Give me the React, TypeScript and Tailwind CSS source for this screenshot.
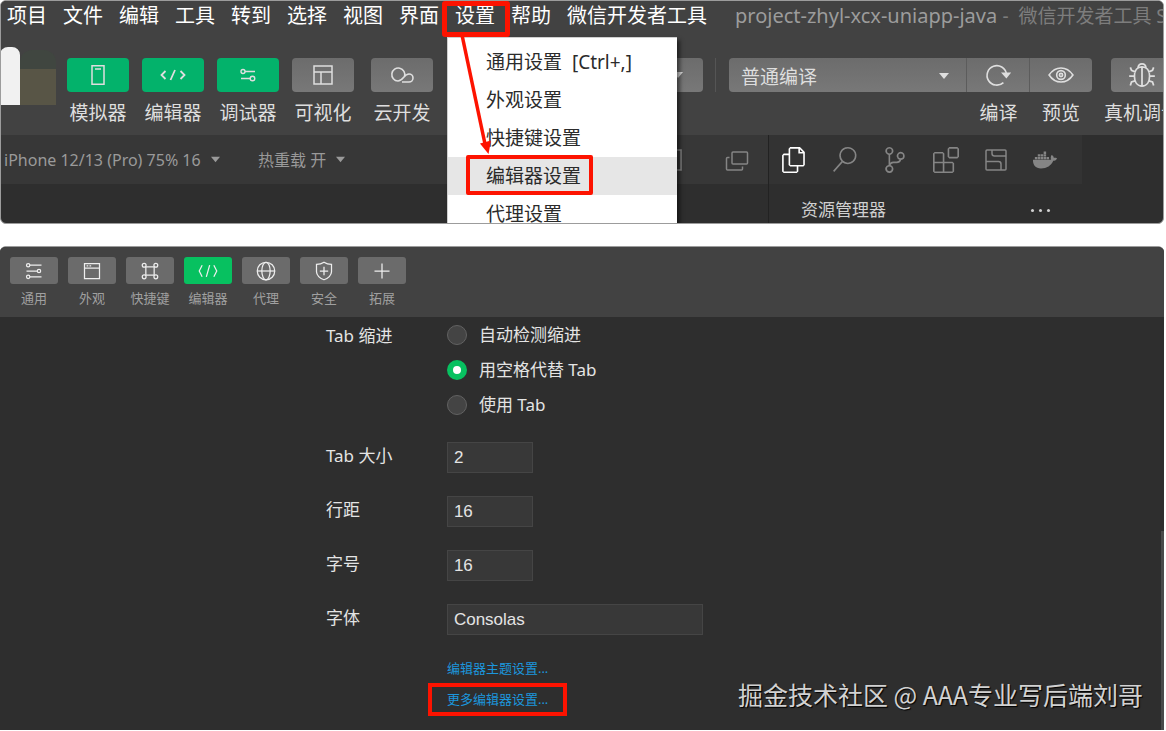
import { useState } from "react";
import type { ReactNode } from "react";
import { VscFiles, VscSearch, VscSourceControl, VscExtensions } from "react-icons/vsc";
import { FaDocker } from "react-icons/fa";

const menus = ["项目", "文件", "编辑", "工具", "转到", "选择", "视图", "界面", "设置", "帮助", "微信开发者工具"];

const settingsMenu = ["通用设置  [Ctrl+,]", "外观设置", "快捷键设置", "编辑器设置", "代理设置"];

function Icon({ size, children }: { size: number; children: ReactNode }) {
  return (
    <svg width={size} height={size} viewBox="0 0 24 24" fill="none" stroke="currentColor" strokeWidth="1.5">
      {children}
    </svg>
  );
}

function Caret({ className }: { className: string }) {
  return (
    <svg className={className} viewBox="0 0 10 6" fill="currentColor">
      <path d="M0 0h10L5 6z" />
    </svg>
  );
}

const tools = [
  {
    label: "模拟器",
    on: true,
    icon: (
      <Icon size={24}>
        <path d="M6 2.8h12v18.4H6zM9 6h6" />
      </Icon>
    ),
  },
  {
    label: "编辑器",
    on: true,
    icon: (
      <svg width="26" height="16" viewBox="0 0 26 16" fill="none" stroke="currentColor" strokeWidth="1.8">
        <path d="M5.500 4 1.500 8l4 4M20.500 4l4 4-4 4M15 3l-4.500 10" />
      </svg>
    ),
  },
  {
    label: "调试器",
    on: true,
    icon: (
      <svg width="18" height="16" viewBox="0 0 18 16" fill="none" stroke="currentColor" strokeWidth="1.4">
        <circle cx="4" cy="4.500" r="2" />
        <path d="M6 4.500h10M2 11.500h9" />
        <circle cx="13.500" cy="11.500" r="2.300" />
      </svg>
    ),
  },
  {
    label: "可视化",
    on: false,
    icon: (
      <Icon size={24}>
        <path d="M3 3h18v18H3zM3 9h18M10 9v12" />
      </Icon>
    ),
  },
  {
    label: "云开发",
    on: false,
    icon: (
      <svg width="24" height="18" viewBox="0 0 24 18" fill="none" stroke="currentColor" strokeWidth="1.6">
        <path d="M14.500 10.500A6.500 6.500 0 1 0 8 15c5 0 6-7 11-7a4 4 0 0 1 0 8h-7" />
      </svg>
    ),
  },
];

const tabs = [
  {
    label: "通用",
    icon: (
      <Icon size={20}>
        <circle cx="5" cy="5" r="2" />
        <circle cx="18" cy="12" r="2" />
        <circle cx="5" cy="19" r="2" />
        <path d="M7 5h14M3 12h13M7 19h14" />
      </Icon>
    ),
  },
  {
    label: "外观",
    icon: (
      <Icon size={20}>
        <path d="M3 3h18v18H3zM3 8.500h18M5.500 5.800h2M9 5.800h2" />
      </Icon>
    ),
  },
  {
    label: "快捷键",
    icon: (
      <Icon size={20}>
        <path d="M7 7h10v10H7z" />
        <circle cx="5" cy="5" r="2.300" />
        <circle cx="19" cy="5" r="2.300" />
        <circle cx="5" cy="19" r="2.300" />
        <circle cx="19" cy="19" r="2.300" />
      </Icon>
    ),
  },
  {
    label: "编辑器",
    icon: (
      <Icon size={20}>
        <path d="M5 5 1.500 12 5 19M19 5l3.500 7L19 19M14 5l-4 14" />
      </Icon>
    ),
  },
  {
    label: "代理",
    icon: (
      <Icon size={20}>
        <circle cx="12" cy="12" r="10.500" />
        <ellipse cx="12" cy="12" rx="5" ry="10.500" />
        <path d="M1.500 12h21" />
      </Icon>
    ),
  },
  {
    label: "安全",
    icon: (
      <Icon size={20}>
        <path d="M12 1.500c3 2 6 2.500 9 2.500v9c0 4-4 8-9 9.500-5-1.500-9-5.500-9-9.500V4c3 0 6-.5 9-2.500zM12 7v10M7 12h10" />
      </Icon>
    ),
  },
  {
    label: "拓展",
    icon: (
      <Icon size={20}>
        <path d="M12 3v18M3 12h18" />
      </Icon>
    ),
  },
];

const indentModes = ["自动检测缩进", "用空格代替 Tab", "使用 Tab"];

const fields = [
  { id: "tab-size", label: "Tab 大小", value: "2", width: "w-[86px]" },
  { id: "line-height", label: "行距", value: "16", width: "w-[86px]" },
  { id: "font-size", label: "字号", value: "16", width: "w-[86px]" },
  { id: "font-family", label: "字体", value: "Consolas", width: "w-[256px]" },
];

function MainWindow() {
  return (
    <section className="relative overflow-hidden rounded-md border border-[#9c9c9c] bg-[#2e2e2e]">
      <header className="bg-[#424242]">
        {/* menu bar */}
        <nav className="flex h-[33px] items-center gap-4 whitespace-nowrap pb-1 pl-[6px] text-[20px] leading-7 text-white">
          {menus.map((m) => (
            <button key={m} className="flex-none">
              {m}
            </button>
          ))}
          <p className="ml-3 flex-none text-[#9c9c9c]">
            project-zhyl-xcx-uniapp-java <span className="text-[19px] text-[#7d7d7d]">- &nbsp;微信开发者工具 S</span>
          </p>
        </nav>

        {/* toolbar */}
        <div className="flex h-[101px] items-start text-[19px] leading-[26px] text-[#dedede]">
          <div className="-ml-px -mt-px flex h-[72px] w-14 flex-none items-end">
            <div className="h-[58px] w-5 rounded-t-lg bg-[#f1f1f1]" />
            <div className="flex h-[55px] flex-1 flex-col rounded-t-xl bg-[#404640]">
              <div className="mt-[19px] flex-1 bg-[#585546]" />
            </div>
          </div>
          <div className="flex flex-none gap-[13px] pl-[11px] pt-6">
            {tools.map((t) => (
              <button key={t.label} className="flex w-[62px] flex-col items-center gap-2 last:ml-1">
                <span
                  className={`flex h-[34px] w-full items-center justify-center rounded-[4px] ${
                    t.on ? "bg-[#03b26b]" : "bg-linear-to-b from-[#6c6c6c] to-[#787878]"
                  }`}
                >
                  {t.icon}
                </span>
                <span className="whitespace-nowrap">{t.label}</span>
              </button>
            ))}
          </div>
          <div className="flex flex-none items-start pt-6">
            <button
              aria-label="模式"
              className="ml-[14px] flex h-[34px] w-[256px] items-center justify-end rounded-[4px] bg-linear-to-b from-[#6c6c6c] to-[#787878] pr-5"
            >
              <Caret className="h-[6px] w-[10px]" />
            </button>
            <span className="ml-3 mr-[13px] h-[34px] w-px bg-[#555555]" />
            <div className="relative">
              <select
                aria-label="编译模式"
                className="h-[34px] w-[238px] appearance-none rounded-l-[4px] border-r border-[#5c5c5c] bg-linear-to-b from-[#6c6c6c] to-[#787878] pl-3 pt-1 text-[19px] leading-[30px]"
              >
                <option>普通编译</option>
              </select>
              <Caret className="pointer-events-none absolute right-[18px] top-[15px] h-[6px] w-[10px]" />
            </div>
            <button className="flex w-[63px] flex-col items-center gap-2">
              <span className="flex h-[34px] w-full items-center justify-center border-r border-[#5c5c5c] bg-linear-to-b from-[#6c6c6c] to-[#787878]">
                <Icon size={26}>
                  <path d="M17 19A9 9 0 1 1 19.800 11" />
                  <path d="M16.500 10.500h6l-2.800 3.500z" fill="currentColor" />
                </Icon>
              </span>
              <span>编译</span>
            </button>
            <button className="flex w-[62px] flex-col items-center gap-2">
              <span className="flex h-[34px] w-full items-center justify-center rounded-r-[4px] bg-linear-to-b from-[#6c6c6c] to-[#787878]">
                <Icon size={26}>
                  <path d="M1 12c3-4.500 7-6.500 11-6.500S20 7.500 23 12c-3 4.500-7 6.500-11 6.500S4 16.500 1 12z" />
                  <circle cx="12" cy="12" r="4" />
                  <circle cx="12" cy="12" r="1.500" />
                </Icon>
              </span>
              <span>预览</span>
            </button>
            <button className="ml-[19px] flex w-[62px] flex-none flex-col items-center gap-2">
              <span className="flex h-[34px] w-full items-center justify-center rounded-[4px] bg-linear-to-b from-[#6c6c6c] to-[#787878]">
                <Icon size={28}>
                  <path d="M12 5c4 0 6.500 3 6.500 8s-2.500 8.500-6.500 8.500S5.500 18 5.500 13 8 5 12 5zM12 5v16.500M8.500 6c.3-2.300 1.500-3.500 3.500-3.500s3.200 1.200 3.500 3.500M1 13h4.500M18.500 13H23M2 5.500l1 2.500 3.500 1.500M22 5.500 21 8l-3.500 1.500M2 21l1-3 3-1M22 21l-1-3-3-1" />
                </Icon>
              </span>
              <span className="whitespace-nowrap">真机调试</span>
            </button>
          </div>
        </div>
      </header>

      <div className="flex h-[88px]">
        {/* simulator pane */}
        <div className="w-[768px] flex-none border-r border-[#222222]">
          <div className="flex h-[49px] items-center bg-[#373737] pl-[3px] text-[16px] text-[#9a9a9a]">
            <button className="flex w-[254px] flex-none items-center gap-[10px]">
              iPhone 12/13 (Pro) 75% 16 <Caret className="h-[7px] w-[9px]" />
            </button>
            <button className="flex items-center gap-[10px]">
              热重载 开 <Caret className="h-[7px] w-[9px]" />
            </button>
            <div className="ml-auto flex items-center gap-[42px] pr-[19px] text-[#858585]">
              <button aria-label="设备">
                <Icon size={24}>
                  <path d="M7 2h15v20H7z" />
                </Icon>
              </button>
              <button aria-label="分离窗口">
                <Icon size={24}>
                  <path d="M8 4h13.500a1 1 0 0 1 1 1v10a1 1 0 0 1-1 1H8a1 1 0 0 1-1-1V5a1 1 0 0 1 1-1zM4.500 9.500h-2a1 1 0 0 0-1 1V21a1 1 0 0 0 1 1h14a1 1 0 0 0 1-1v-2.500" />
                </Icon>
              </button>
            </div>
          </div>
        </div>

        {/* explorer pane */}
        <aside className="w-[313px] flex-none">
          <div className="flex h-[49px] items-center gap-[25px] bg-[#333333] pl-3 text-[#858585]">
            <button aria-label="资源管理器" className="text-white">
              <VscFiles size={26} />
            </button>
            <button aria-label="搜索">
              <VscSearch size={25} />
            </button>
            <button aria-label="源代码管理">
              <VscSourceControl size={26} />
            </button>
            <button aria-label="扩展">
              <VscExtensions size={26} />
            </button>
            <button aria-label="大纲">
              <Icon size={24}>
                <path d="M3 2h18a1 1 0 0 1 1 1v18a1 1 0 0 1-1 1H3a1 1 0 0 1-1-1V3a1 1 0 0 1 1-1zM8 2v3.500A2.500 2.500 0 0 0 10.500 8H22M2 13.500h12.500A2.500 2.500 0 0 1 17 16v6" />
              </Icon>
            </button>
            <button aria-label="Docker">
              <FaDocker size={24} />
            </button>
          </div>
          <div className="flex items-center justify-between pl-8 pr-8 pt-3">
            <h2 className="text-[17px] leading-7 text-[#d0d0d0]">资源管理器</h2>
            <button aria-label="更多" className="flex gap-[5px]">
              <i className="size-[3px] rounded-full bg-[#d0d0d0]" />
              <i className="size-[3px] rounded-full bg-[#d0d0d0]" />
              <i className="size-[3px] rounded-full bg-[#d0d0d0]" />
            </button>
          </div>
        </aside>
      </div>

      {/* open settings menu */}
      <ul className="absolute left-[446px] top-9 h-[187px] w-[230px] overflow-hidden border-l border-t border-[#cfcfcf] bg-white pt-[5px] text-[19px] leading-[38px] text-[#2b2b2b] shadow-[3px_3px_4px_rgba(0,0,0,0.5)]">
        {settingsMenu.map((item) => (
          <li key={item} className={item === "编辑器设置" ? "bg-[#e6e6e6]" : ""}>
            <button className="w-full whitespace-pre pl-[38px] text-left">{item}</button>
          </li>
        ))}
      </ul>

      {/* red callouts */}
      <div className="absolute left-[441px] top-0 h-[36px] w-[68px] rounded-[3px] border-[5px] border-[#fd1300]" />
      <div className="absolute left-[465px] top-[154px] h-[40px] w-[127px] rounded-[2px] border-4 border-[#fd1300]" />
      <svg className="absolute left-[454px] top-[34px]" width="40" height="120" viewBox="0 0 40 120" fill="#fd1300">
        <path d="M7 0 30 109" stroke="#fd1300" strokeWidth="3.500" />
        <path d="M25 108.500 36 105.500 33.500 119z" />
      </svg>
    </section>
  );
}

function SettingsWindow() {
  const [indent, setIndent] = useState(indentModes[1]);

  return (
    <section className="relative overflow-hidden rounded-t-md border-t border-[#9c9c9c] bg-[#2e2e2e]">
      <nav className="flex gap-[10px] bg-[#424242] pb-[9px] pl-[10px] pt-[10px]">
        {tabs.map((t) => (
          <button key={t.label} className="flex w-12 flex-col items-center gap-1">
            <span
              className={`flex h-[27px] w-full items-center justify-center rounded-[3px] text-[#eeeeee] ${
                t.label === "编辑器" ? "bg-[#07c160]" : "bg-[#6b6b6b]"
              }`}
            >
              {t.icon}
            </span>
            <span className="text-[13px] leading-5 text-[#a0a0a0]">{t.label}</span>
          </button>
        ))}
      </nav>

      <form className="pb-[15px] pl-[28%] text-[17px] text-[#e4e4e4]">
        <div className="mb-5 flex" role="radiogroup" aria-labelledby="indent-label">
          <span id="indent-label" className="w-[121px] flex-none leading-[38px]">
            Tab 缩进
          </span>
          <div>
            {indentModes.map((mode) => (
              <label key={mode} className="flex h-[35px] items-center gap-3">
                <input
                  type="radio"
                  name="indent"
                  checked={indent === mode}
                  onChange={() => setIndent(mode)}
                  className="size-5 appearance-none rounded-full border border-[#626262] bg-[#444444] checked:border-[6px] checked:border-[#07c160] checked:bg-white"
                />
                {mode}
              </label>
            ))}
          </div>
        </div>

        {fields.map((f) => (
          <div key={f.id} className="mb-[23px] flex last-of-type:mb-[18px]">
            <label htmlFor={f.id} className="w-[121px] flex-none leading-7">
              {f.label}
            </label>
            <input
              id={f.id}
              defaultValue={f.value}
              className={`h-[31px] border border-[#454545] bg-[#383838] px-[6px] font-['Liberation_Sans',sans-serif] ${f.width}`}
            />
          </div>
        ))}

        <nav className="flex flex-col items-start pl-[121px] text-[13px] leading-[31px] text-[#1c96dc]">
          <a href="#theme">编辑器主题设置...</a>
          <a href="#more" className="relative">
            更多编辑器设置...
            <span className="absolute -inset-x-[19px] -inset-y-px border-4 border-[#fd1300]" />
          </a>
        </nav>
      </form>

      {/* scrollbar thumb */}
      <div className="absolute bottom-0 right-0 h-[199px] w-[3px] bg-[#4a4a4a]" />
      <p className="absolute bottom-[18px] right-[21px] whitespace-nowrap font-['Noto_Sans_CJK_SC',sans-serif] text-[25px] leading-9 text-[#d2d2d2] [text-shadow:1px_1px_1px_#000]">
        掘金技术社区 @ AAA专业写后端刘哥
      </p>
    </section>
  );
}

export default function App() {
  return (
    <main className="flex flex-col gap-[22px] overflow-hidden bg-white pr-[2px] font-['Noto_Sans','Noto_Sans_CJK_SC',sans-serif]">
      <MainWindow />
      <SettingsWindow />
    </main>
  );
}
